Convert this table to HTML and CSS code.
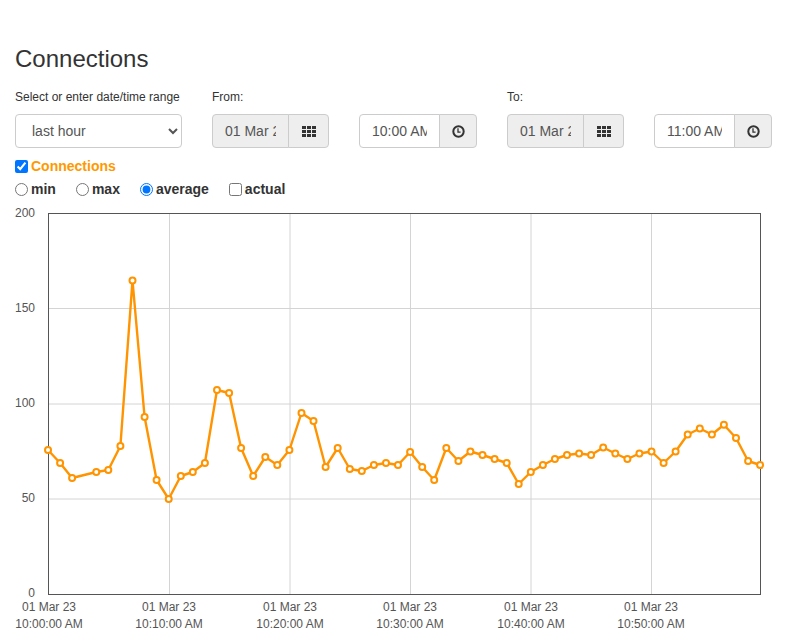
FILE: index.html
```html
<!DOCTYPE html>
<html>
<head>
<meta charset="utf-8">
<title>Connections</title>
<link rel="stylesheet" href="styles.css">
</head>
<body>
<div class="page">
  <h1 class="title">Connections</h1>
  <div class="range-grid">
    <label class="field-label">Select or enter date/time range</label>
    <label class="field-label">From:</label>
    <span class="field-label"></span>
    <label class="field-label">To:</label>
    <span class="field-label"></span>

    <select class="range-select">
      <option>last hour</option>
    </select>
    <div class="input-group">
      <input class="group-input readonly" value="01 Mar 2023" readonly>
      <button class="group-btn" type="button">
        <svg class="icon-th" width="14" height="11" viewBox="0 0 14 11"><g fill="#333"><rect x="0" y="0" width="4" height="3"/><rect x="5" y="0" width="4" height="3"/><rect x="10" y="0" width="4" height="3"/><rect x="0" y="4" width="4" height="3"/><rect x="5" y="4" width="4" height="3"/><rect x="10" y="4" width="4" height="3"/><rect x="0" y="8" width="4" height="3"/><rect x="5" y="8" width="4" height="3"/><rect x="10" y="8" width="4" height="3"/></g></svg>
      </button>
    </div>
    <div class="input-group">
      <input class="group-input" value="10:00 AM">
      <button class="group-btn narrow" type="button">
        <svg width="13" height="13" viewBox="0 0 13 13"><circle cx="6.5" cy="6.5" r="5.2" fill="none" stroke="#333" stroke-width="2"/><path d="M6 3.2V7.2H8.6" fill="none" stroke="#333" stroke-width="1.3"/></svg>
      </button>
    </div>
    <div class="input-group">
      <input class="group-input readonly" value="01 Mar 2023" readonly>
      <button class="group-btn" type="button">
        <svg class="icon-th" width="14" height="11" viewBox="0 0 14 11"><g fill="#333"><rect x="0" y="0" width="4" height="3"/><rect x="5" y="0" width="4" height="3"/><rect x="10" y="0" width="4" height="3"/><rect x="0" y="4" width="4" height="3"/><rect x="5" y="4" width="4" height="3"/><rect x="10" y="4" width="4" height="3"/><rect x="0" y="8" width="4" height="3"/><rect x="5" y="8" width="4" height="3"/><rect x="10" y="8" width="4" height="3"/></g></svg>
      </button>
    </div>
    <div class="input-group">
      <input class="group-input" value="11:00 AM">
      <button class="group-btn narrow" type="button">
        <svg width="13" height="13" viewBox="0 0 13 13"><circle cx="6.5" cy="6.5" r="5.2" fill="none" stroke="#333" stroke-width="2"/><path d="M6 3.2V7.2H8.6" fill="none" stroke="#333" stroke-width="1.3"/></svg>
      </button>
    </div>
  </div>

  <div class="series-row">
    <label class="opt series"><input type="checkbox" checked><span>Connections</span></label>
  </div>
  <div class="mode-row">
    <label class="opt"><input type="radio" name="mode"><span>min</span></label>
    <label class="opt"><input type="radio" name="mode"><span>max</span></label>
    <label class="opt"><input type="radio" name="mode" checked><span>average</span></label>
    <label class="opt"><input type="checkbox"><span>actual</span></label>
  </div>
</div>

<svg class="chart" width="787" height="429" viewBox="0 205 787 429">
  <g stroke="#d4d4d4" stroke-width="1">
    <line x1="48" y1="308.5" x2="760" y2="308.5"/>
    <line x1="48" y1="404" x2="760" y2="404"/>
    <line x1="48" y1="499" x2="760" y2="499"/>
    <line x1="169.5" y1="213" x2="169.5" y2="594"/>
    <line x1="290" y1="213" x2="290" y2="594"/>
    <line x1="410.5" y1="213" x2="410.5" y2="594"/>
    <line x1="531" y1="213" x2="531" y2="594"/>
    <line x1="651.5" y1="213" x2="651.5" y2="594"/>
  </g>
  <rect x="48.5" y="213.5" width="712" height="381" fill="none" stroke="#555" stroke-width="1"/>
  <g class="axis-text" text-anchor="end">
    <text x="35" y="217">200</text>
    <text x="35" y="312">150</text>
    <text x="35" y="407">100</text>
    <text x="35" y="502">50</text>
    <text x="35" y="597">0</text>
  </g>
  <g class="axis-text" text-anchor="middle">
    <text x="49" y="611">01 Mar 23</text><text x="49" y="628">10:00:00 AM</text>
    <text x="169" y="611">01 Mar 23</text><text x="169" y="628">10:10:00 AM</text>
    <text x="290" y="611">01 Mar 23</text><text x="290" y="628">10:20:00 AM</text>
    <text x="410" y="611">01 Mar 23</text><text x="410" y="628">10:30:00 AM</text>
    <text x="531" y="611">01 Mar 23</text><text x="531" y="628">10:40:00 AM</text>
    <text x="651" y="611">01 Mar 23</text><text x="651" y="628">10:50:00 AM</text>
  </g>
  <g id="series"></g>
</svg>

<script>
(function(){
  var ys = [450,463,478,null,472,470,446,280.5,417,480,499,476,472,463,390,393,448,476,457,465,450,413,421,467,448,469,471,465,463,465,452,467,480,448,461,451.5,455,459,463,484,472,465,459,455,453.5,455,447.5,453.5,459,453.5,451.5,463,451.5,434.5,428.5,434.5,424.7,438,461,465];
  var pts = [];
  for (var i = 0; i < ys.length; i++) {
    if (ys[i] === null) continue;
    pts.push([48 + i * 12.07, ys[i]]);
  }
  var ns = "http://www.w3.org/2000/svg";
  var g = document.getElementById("series");
  var pl = document.createElementNS(ns, "polyline");
  pl.setAttribute("points", pts.map(function(p){return p[0].toFixed(1)+","+p[1];}).join(" "));
  pl.setAttribute("class", "series-line");
  g.appendChild(pl);
  pts.forEach(function(p){
    var c = document.createElementNS(ns, "circle");
    c.setAttribute("cx", p[0].toFixed(1));
    c.setAttribute("cy", p[1]);
    c.setAttribute("r", "3");
    c.setAttribute("class", "series-dot");
    g.appendChild(c);
  });
})();
</script>
</body>
</html>
```

FILE: styles.css
```css
html, body {
  margin: 0;
  padding: 0;
  background: #fff;
}
body {
  font-family: "Liberation Sans", Arial, sans-serif;
  font-size: 14px;
  color: #333;
}
.page {
  padding: 0 15px;
}
.title {
  margin: 46px 0 0;
  font-size: 24px;
  line-height: 26px;
  font-weight: normal;
  color: #333;
}
.range-grid {
  display: grid;
  grid-template-columns: 167px 117px 118px 117px 118px;
  column-gap: 30px;
  row-gap: 8px;
  margin-top: 17px;
}
.field-label {
  font-size: 12px;
  line-height: 17px;
  color: #333;
}
.range-select {
  height: 34px;
  border: 1px solid #ccc;
  border-radius: 4px;
  padding: 6px 8px 6px 12px;
  font-family: inherit;
  font-size: 14px;
  color: #555;
  background: #fff;
}
.input-group {
  display: flex;
  height: 34px;
}
.group-input {
  flex: 1;
  min-width: 0;
  height: 34px;
  box-sizing: border-box;
  border: 1px solid #ccc;
  border-radius: 4px 0 0 4px;
  padding: 6px 12px;
  font-family: inherit;
  font-size: 14px;
  color: #555;
  background: #fff;
  outline: none;
}
.group-input.readonly {
  background: #eee;
}
.group-btn {
  width: 41px;
  height: 34px;
  box-sizing: border-box;
  margin-left: -1px;
  border: 1px solid #ccc;
  border-radius: 0 4px 4px 0;
  background: #eee;
  padding: 0;
  display: flex;
  align-items: center;
  justify-content: center;
}
.group-btn.narrow {
  width: 38px;
}
.series-row {
  margin-top: 10px;
  line-height: 17px;
}
.mode-row {
  display: flex;
  gap: 20px;
  margin-top: 2px;
  line-height: 20px;
}
.opt {
  display: inline-flex;
  align-items: center;
  gap: 3px;
  font-weight: bold;
  font-size: 14px;
  color: #333;
}
.opt input {
  margin: 0;
  width: 13px;
  height: 13px;
}
.series span {
  color: #f90;
}
.chart {
  display: block;
  margin-top: 6px;
}
.axis-text {
  font-family: "Liberation Sans", Arial, sans-serif;
  font-size: 12px;
  fill: #555;
}
.series-line {
  fill: none;
  stroke: #ff9400;
  stroke-width: 2.4;
  stroke-linejoin: round;
}
.series-dot {
  fill: #fff;
  stroke: #ff9400;
  stroke-width: 2;
}
```
